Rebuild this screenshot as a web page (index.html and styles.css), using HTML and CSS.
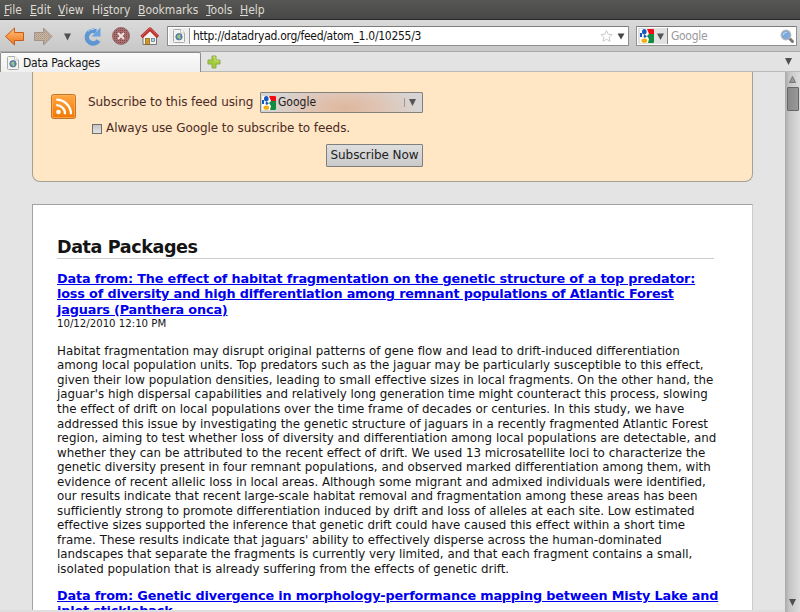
FILE: index.html
```html
<!DOCTYPE html>
<html lang="en">
<head>
<meta charset="utf-8">
<title>Data Packages</title>
<link rel="stylesheet" href="styles.css">
</head>
<body>
<svg class="defs" width="0" height="0" aria-hidden="true">
  <defs>
    <linearGradient id="orange" x2="0" y2="1"><stop stop-color="#ffc17a"/><stop offset="1" stop-color="#ee741c"/></linearGradient>
    <linearGradient id="rss" x2="0" y2="1"><stop stop-color="#ffa845"/><stop offset="1" stop-color="#f07800"/></linearGradient>
    <pattern id="dots" width="2" height="2" patternUnits="userSpaceOnUse"><rect width="2" height="2" fill="#cdb7a1"/><rect width="1" height="1" fill="#a39587"/><rect x="1" y="1" width="1" height="1" fill="#b4a28f"/></pattern>
    <pattern id="reddots" width="2" height="2" patternUnits="userSpaceOnUse"><rect width="2" height="2" fill="#a96e6e"/><rect width="1" height="1" fill="#7b4a4a"/></pattern>
    <symbol id="page" viewBox="0 0 12 14">
      <path d="M.5 1.500a1 1 0 0 1 1-1h6l4 3.500v8.500a1 1 0 0 1-1 1h-9a1 1 0 0 1-1-1z" fill="#f3f3f1" stroke="#a9aba7"/>
      <path d="M7.500.5v3.500h4" fill="#fff" stroke="#c0c2be"/>
      <circle cx="6" cy="7.800" r="3.200" fill="#5d8dba" stroke="#47698b" stroke-width=".8"/>
      <path d="M4.500 6.500l2-1 1 1-1 1.500 1.500 1-1.500 1.500-1-1.500-1.500-1z" fill="#a4c87a"/>
    </symbol>
    <symbol id="google" viewBox="0 0 14 14">
      <rect width="14" height="14" rx="1" fill="#fff"/>
      <path d="M7 0h6a1 1 0 0 1 1 1v4H9z" fill="#f00c10"/>
      <path d="M9 5h5v8a1 1 0 0 1-1 1H8l1-4-2-3z" fill="#128c42"/>
      <path d="M0 4h2v4H0z" fill="#185abc"/>
      <ellipse cx="4.300" cy="2.700" rx="2.300" ry="2.700" fill="#185abc"/>
      <path d="M4 5.500l3 1.500-2 2-1.500-1z" fill="#185abc"/>
      <ellipse cx="4.300" cy="11.700" rx="2.900" ry="2.100" fill="#f4b010"/>
    </symbol>
  </defs>
</svg>
<nav class="menu">
  <span class="m1"><u>F</u>ile</span><span class="m2"><u>E</u>dit</span><span class="m3"><u>V</u>iew</span><span class="m4">Hi<u>s</u>tory</span><span class="m5"><u>B</u>ookmarks</span><span class="m6"><u>T</u>ools</span><span class="m7"><u>H</u>elp</span>
</nav>
<header class="toolbar">
  <div class="buttons">
    <svg width="168" height="28" viewBox="0 24 168 28">
      <path d="M5.500 36.500L14.500 28v4.500h9v8h-9V45z" fill="url(#orange)" stroke="#c65d1c" stroke-linejoin="round"/>
      <path d="M52 36.500L43.500 28v4.500h-9v8h9V45z" fill="url(#dots)" stroke="#a0938a" stroke-linejoin="round"/>
      <path d="M64 33.500h7l-3.500 7z" fill="#50504e"/>
      <path d="M98.500 40.500A6.300 6.300 0 1 1 96 31.500" fill="none" stroke="#5d96d3" stroke-width="4.600"/>
      <path d="M100.500 27.500v9H91.500z" fill="#6aa5e2"/>
      <path d="M88 31.500a6 6 0 0 1 6-2" stroke="#a9cdf1" fill="none"/>
      <circle cx="121" cy="36" r="8.500" fill="url(#reddots)" stroke="#916060" stroke-width=".8"/>
      <path d="M118 33l6 6M124 33l-6 6" stroke="#eee4e2" stroke-width="2"/>
      <path d="M143 35v9.500h13.500V35l-6.700-6z" fill="#f2f1ee" stroke="#777"/>
      <rect x="145.500" y="38.500" width="4" height="6" fill="#d09624" stroke="#80601c" stroke-width=".7"/>
      <rect x="151.500" y="38.500" width="3" height="3" fill="#b5d3ec" stroke="#59738b" stroke-width=".7"/>
      <path d="M141.500 37l8.500-8 8 8" fill="none" stroke="#ba2e2e" stroke-width="3.200" stroke-linejoin="round"/>
      <path d="M142 35.800l8-7.400 7.500 7.400" fill="none" stroke="#e36b6b" stroke-width=".8"/>
    </svg>
  </div>
  <div class="url">
    <span class="identity"><svg width="12" height="14"><use href="#page"/></svg></span>
    <span class="address">http://datadryad.org/feed/atom_1.0/10255/3</span>
    <svg class="star" width="26" height="14" viewBox="0 0 26 14"><path d="M6.500 1.500l1.600 3.700 4 .4-3 2.700.9 4-3.500-2.100L3 12.300l.9-4-3-2.700 4-.4z" fill="#fff" stroke="#cacaca"/><path d="M17.500 4.500h7l-3.500 6z" fill="#474745"/></svg>
  </div>
  <div class="search">
    <span class="engine"><svg width="14" height="14"><use href="#google"/></svg><svg width="7" height="7"><path d="M0 .5h7L3.500 7z" fill="#555"/></svg></span>
    <span class="hint">Google</span>
    <svg width="15" height="15" viewBox="0 0 15 15"><path d="M10 10l2.500 2.500" stroke="#777" stroke-width="3" stroke-linecap="round"/><circle cx="6" cy="6" r="4.700" fill="#7da9dd" stroke="#b3b5b5" stroke-width="1.400"/><path d="M3.500 6a2.500 2.500 0 0 1 3-2.500" stroke="#d6e7fa" fill="none"/></svg>
  </div>
</header>
<div class="tabs">
  <div class="tab"><svg width="12" height="14"><use href="#page"/></svg><span>Data Packages</span></div>
  <svg class="plus" width="14" height="14" viewBox="0 0 14 14"><path d="M5 1h4v4h4v4H9v4H5V9H1V5h4z" fill="#a3cc3c" stroke="#8bab4a" stroke-linejoin="round"/><path d="M6 2h2v4h4" fill="none" stroke="#c5e273"/></svg>
  <svg class="alltabs" width="7" height="7"><path d="M0 0h7L3.500 7z" fill="#50504e"/></svg>
</div>
<main class="view">
  <div class="content">
    <section class="feed">
      <svg class="rss" width="25" height="25" viewBox="0 0 25 25"><rect x=".5" y=".5" width="24" height="24" rx="2" fill="url(#rss)" stroke="#c97424"/><rect x="1.500" y="1.500" width="22" height="22" rx="1" fill="none" stroke="#ffb868" stroke-opacity=".6"/><circle cx="7.500" cy="18" r="2.300" fill="#fff"/><path d="M5.300 11.200a8.500 8.500 0 0 1 8.700 9M5.300 5.600a14.500 14.500 0 0 1 14.700 14.600" fill="none" stroke="#fff" stroke-width="2.300"/></svg>
      <div class="options">
        <div class="using"><span class="t-using">Subscribe to this feed using</span><span class="select"><svg width="14" height="14"><use href="#google"/></svg><span class="choice">Google</span><i></i><svg width="7" height="7"><path d="M0 0h7L3.500 7z" fill="#555"/></svg></span></div>
        <div class="always"><span class="check"></span><span class="t-always">Always use Google to subscribe to feeds.</span></div>
        <div class="subscribe"><span>Subscribe Now</span></div>
      </div>
    </section>
    <article class="paper">
      <h1><span>Data Packages</span></h1>
      <h2><a>Data from: The effect of habitat fragmentation on the genetic structure of a top predator:<br>loss of diversity and high differentiation among remnant populations of Atlantic Forest<br>jaguars (Panthera onca)</a></h2>
      <div class="date">10/12/2010 12:10 PM</div>
      <p>Habitat fragmentation may disrupt original patterns of gene flow and lead to drift-induced differentiation<br>among local population units. Top predators such as the jaguar may be particularly susceptible to this effect,<br>given their low population densities, leading to small effective sizes in local fragments. On the other hand, the<br>jaguar's high dispersal capabilities and relatively long generation time might counteract this process, slowing<br>the effect of drift on local populations over the time frame of decades or centuries. In this study, we have<br>addressed this issue by investigating the genetic structure of jaguars in a recently fragmented Atlantic Forest<br>region, aiming to test whether loss of diversity and differentiation among local populations are detectable, and<br>whether they can be attributed to the recent effect of drift. We used 13 microsatellite loci to characterize the<br>genetic diversity present in four remnant populations, and observed marked differentiation among them, with<br>evidence of recent allelic loss in local areas. Although some migrant and admixed individuals were identified,<br>our results indicate that recent large-scale habitat removal and fragmentation among these areas has been<br>sufficiently strong to promote differentiation induced by drift and loss of alleles at each site. Low estimated<br>effective sizes supported the inference that genetic drift could have caused this effect within a short time<br>frame. These results indicate that jaguars' ability to effectively disperse across the human-dominated<br>landscapes that separate the fragments is currently very limited, and that each fragment contains a small,<br>isolated population that is already suffering from the effects of genetic drift.</p>
      <h2><a>Data from: Genetic divergence in morphology-performance mapping between Misty Lake and<br>inlet stickleback</a></h2>
    </article>
  </div>
  <div class="scroll">
    <svg width="7" height="7"><path d="M3.500 .5l3 6h-6z" fill="#999" stroke="#777"/></svg>
    <div class="thumb"></div>
    <svg class="down" width="7" height="7"><path d="M0 0h7L3.500 7z" fill="#50504e"/></svg>
  </div>
</main>
</body>
</html>
```
FILE: styles.css
```css
* { box-sizing: border-box; }
body {
  margin: 0; width: 800px; height: 612px; overflow: hidden;
  display: flex; flex-direction: column;
  background: #e4e4e4; color: #141414;
  font: 12px/15px "DejaVu Sans", sans-serif;
  font-variant-ligatures: none;
  white-space: nowrap;
}
svg { display: block; flex: none; }
.defs { position: absolute; }
.menu, .address, .hint, .tab span, .choice, .date { font-family: "DejaVu Sans Condensed", "DejaVu Sans", sans-serif; font-stretch: condensed; }
.menu {
  height: 20px; flex: none; display: flex; padding-left: 4px; line-height: 20px;
  background: linear-gradient(#565654, #484846); border-bottom: 1px solid #29242a; color: #dfdbd2;
}
.menu u { text-underline-offset: 1px; }
.m1 { width: 26px; } .m2 { width: 28px; } .m3 { width: 34px; } .m4 { width: 46px; }
.m5 { width: 68px; } .m6 { width: 34px; }
.toolbar { height: 32px; flex: none; display: flex; background: linear-gradient(#dadada, #c8c8c8); border-bottom: 1px solid #aaa; }
.buttons { width: 167px; padding-top: 4px; overflow: hidden; flex: none; }
.url, .search { margin-top: 6px; height: 20px; background: #fff; border: 1px solid #8e8e8c; border-top-color: #7c7c7a; border-radius: 1px; display: flex; align-items: center; }
.url { width: 462px; }
.identity { width: 21px; height: 16px; border-right: 1px solid #999; background: #eee; display: flex; justify-content: center; align-items: center; margin-left: 1px; }
.address { margin-left: 3px; color: #111; letter-spacing: -.28px; }
.star { margin-left: auto; margin-right: 2px; }
.search { width: 161px; margin-left: 7px; padding-right: 1px; }
.engine { width: 30px; height: 16px; margin-left: 1px; display: flex; align-items: center; gap: 3px; padding-left: 2px; background: #e2e2e2; border-right: 1px solid #888; }
.hint { color: #9a9a9a; margin-left: 3px; margin-right: auto; letter-spacing: -.3px; }
.tabs { height: 20px; flex: none; display: flex; align-items: center; background: #e3e3e3; border-bottom: 1px solid #b9b9b5; }
.tab { width: 201px; height: 20px; margin-bottom: -1px; display: flex; align-items: center; padding-left: 6px; gap: 4px; background: linear-gradient(#fafafa, #f0f0f0); border: 1px solid #8c8c8a; border-bottom: 0; border-radius: 2px 2px 0 0; }
.tab span { letter-spacing: -.2px; padding-top: 1px; }
.plus { margin-left: 6px; }
.alltabs { margin-left: auto; margin-right: 8px; }
.view { flex: 1; display: flex; min-height: 0; }
.content { width: 785px; padding-left: 32px; overflow: hidden; border-bottom: 2px solid #dedede; }
.feed { width: 721px; height: 110px; background: #ffe6c4; border: 1px solid #a3a096; border-top: 0; border-radius: 0 0 8px 8px; display: flex; color: #4a2b26; }
.rss { margin: 22px 0 0 18px; }
.options { margin-left: 12px; padding-top: 20px; }
.using { display: flex; align-items: center; width: 335px; height: 21px; justify-content: space-between; }
.t-using, .t-always, .subscribe { letter-spacing: -.07px; }
.select { width: 163px; height: 21px; border: 1px solid #83817e; border-radius: 1px; display: flex; align-items: center; padding-left: 1px; color: #222; background: radial-gradient(ellipse 75px 28px at 52% 80%, #dfb79d, #dfc5b5 50%, #d7d5d3); }
.choice { margin-left: 2px; }
.select i { width: 1px; height: 9px; background: #999; margin-left: auto; margin-right: 4px; }
.select svg:last-child { margin-right: 6px; }
.always { display: flex; align-items: center; height: 15px; margin-top: 8px; padding-left: 4px; gap: 4px; }
.check { width: 10px; height: 10px; border: 1px solid #6e6e6c; background: linear-gradient(#c4c4c4, #e2e2e2); }
.subscribe { width: 97px; height: 23px; margin: 8px 0 0 238px; border: 1px solid #7f7f7d; border-radius: 1px; background: linear-gradient(#dedede, #cacaca); color: #222; line-height: 21px; text-align: center; }
.paper { width: 721px; height: 480px; margin-top: 22px; padding: 32px 0 0 24px; background: #fff; border: 1px solid #a2a29f; border-right-color: #ccc; }
h1 { width: 657px; height: 22px; margin: 0 0 12px; font-size: 17.600px; line-height: 20px; letter-spacing: -.43px; border-bottom: 1px solid #ccc; }
h2 { margin: 0; font-size: 12.800px; line-height: 15.300px; letter-spacing: -.16px; }
h2 a { color: #0000ee; text-decoration: underline; }
.date { font-size: 11.300px; line-height: 14px; }
p { margin: 13px 0 11.500px; font-size: 11.850px; line-height: 14.530px; }
.scroll { width: 15px; background: linear-gradient(90deg, #aaa, #c6c6c6 30%, #dcdcdc); display: flex; flex-direction: column; align-items: center; padding-top: 4px; }
.thumb { width: 12px; height: 24px; margin-top: 4px; border: 1px solid #666; border-radius: 1px; background: linear-gradient(90deg, #888, #999); }
.down { margin-top: auto; margin-bottom: 6px; }
```
